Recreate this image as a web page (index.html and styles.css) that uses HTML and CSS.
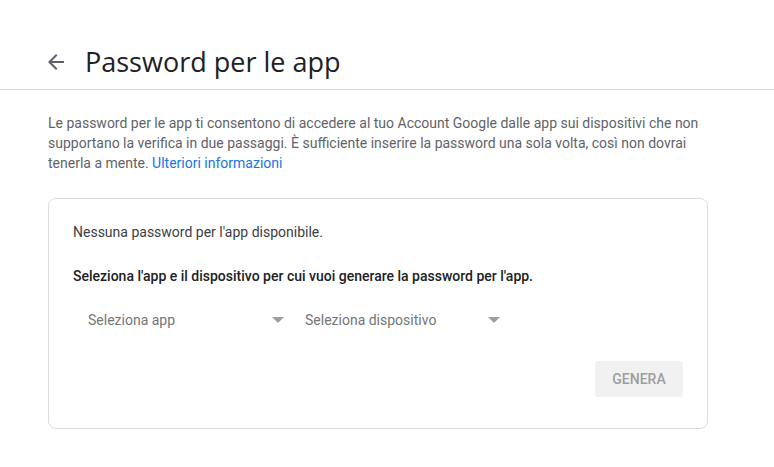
FILE: index.html
```html
<!DOCTYPE html>
<html lang="it">
<head>
<meta charset="utf-8">
<title>Password per le app</title>
<link rel="stylesheet" href="styles.css">
</head>
<body>
<header class="header">
  <span class="back">
    <svg width="24" height="24" viewBox="0 0 24 24"><path d="M20 11H7.83l5.59-5.59L12 4l-8 8 8 8 1.41-1.41L7.83 13H20v-2z" fill="#5f6368"/></svg>
  </span>
  <h1 class="title">Password per le app</h1>
</header>
<main class="main">
  <p class="intro">Le password per le app ti consentono di accedere al tuo Account Google dalle app sui dispositivi che non supportano la verifica in due passaggi. È sufficiente inserire la password una sola volta, così non dovrai tenerla a mente. <a class="link" href="#">Ulteriori informazioni</a></p>
  <section class="card">
    <p class="empty">Nessuna password per l'app disponibile.</p>
    <p class="instr">Seleziona l'app e il dispositivo per cui vuoi generare la password per l'app.</p>
    <div class="selects">
      <div class="select"><span>Seleziona app</span><span class="caret"></span></div>
      <div class="select"><span>Seleziona dispositivo</span><span class="caret"></span></div>
    </div>
    <div class="actions">
      <button class="btn" disabled>Genera</button>
    </div>
  </section>
</main>
</body>
</html>
```
FILE: styles.css
```css
* { box-sizing: border-box; }
body {
  margin: 0;
  background: #fff;
  font-family: Roboto, "Liberation Sans", Arial, sans-serif;
  color: #3c4043;
}
.header {
  display: flex;
  align-items: center;
  height: 90px;
  padding: 34px 0 0 44px;
  border-bottom: 1px solid #dadce0;
}
.back {
  display: flex;
  width: 24px;
  height: 24px;
  margin-right: 17px;
}
.title {
  margin: 0;
  font-family: "Open Sans", Roboto, sans-serif;
  font-weight: 400;
  font-size: 27px;
  line-height: 32px;
  color: #202124;
}
.main {
  padding: 23px 0 0 48px;
  width: 708px;
}
.intro {
  margin: 0;
  font-size: 14px;
  line-height: 20px;
  color: #5f6368;
}
.link {
  color: #1a73e8;
  text-decoration: none;
}
.card {
  margin-top: 25px;
  border: 1px solid #dadce0;
  border-radius: 8px;
  padding: 23px 24px 31px 24px;
}
.empty {
  margin: 0;
  font-size: 14px;
  line-height: 20px;
  color: #3c4043;
}
.instr {
  margin: 24px 0 0;
  font-size: 14px;
  line-height: 20px;
  font-weight: 500;
  color: #202124;
}
.selects {
  display: flex;
  margin-top: 14px;
  height: 40px;
}
.select {
  width: 216px;
  display: flex;
  align-items: center;
  justify-content: space-between;
  padding: 0 5px 0 15px;
  font-size: 14px;
  color: #757575;
}
.select + .select { padding-left: 16px; }
.caret {
  width: 0;
  height: 0;
  border-left: 6px solid transparent;
  border-right: 6px solid transparent;
  border-top: 6px solid #9e9e9e;
}
.actions {
  display: flex;
  justify-content: flex-end;
  margin-top: 21px;
}
.btn {
  width: 88px;
  height: 36px;
  border: none;
  border-radius: 3px;
  background: #f1f1f1;
  color: #9e9e9e;
  font-family: Roboto, sans-serif;
  font-size: 14px;
  font-weight: 500;
  text-transform: uppercase;
}
```
